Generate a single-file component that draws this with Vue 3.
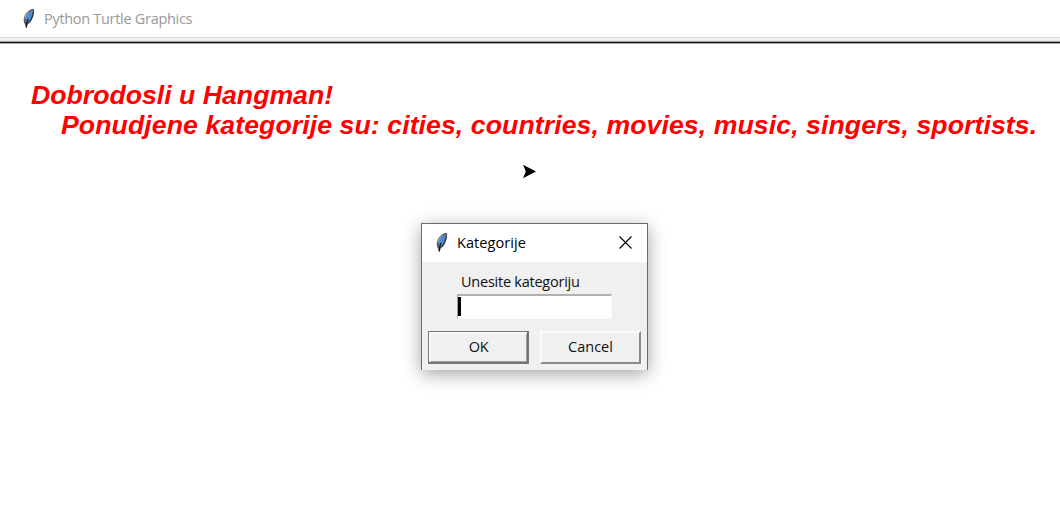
<script setup>
import { ref } from 'vue'

const category = ref('')
</script>

<template>
  <main class="window">
    <svg class="defs" width="0" height="0" aria-hidden="true">
      <symbol id="feather" viewBox="0 0 13 21">
        <path d="M12 .8C8.300 .8 3.800 4.200 2.300 8.800c-.9 2.500-.8 5 .2 6.800L4.300 19.800 5.700 16.300C8.900 14.600 10.800 11 11.500 7.500 12 5 12.300 3 12 .8z" fill="#555b63" />
        <path d="M10.800 2C7.600 3.300 3.900 7.500 3.200 13l1.500 2C8.200 12.600 10.400 8 10.800 2z" fill="#4d8ad6" />
        <path d="M8 2.600C5 4.300 2.700 7.500 2.300 11.300l1.300-1z" fill="#9aa1a9" />
        <path d="M6 11C5 13 4.400 15.500 4.300 19.500" fill="none" stroke="#15191f" stroke-width="1.400" />
        <path d="M11.300 4C10.900 8.500 9 12.500 6.200 15" fill="none" stroke="#23272d" stroke-width=".8" />
      </symbol>
    </svg>
    <header class="titlebar">
      <svg class="feather"><use href="#feather" /></svg>
      <span class="title">Python Turtle Graphics</span>
    </header>
    <div class="edge"></div>

    <section class="canvas">
      <p class="line first">Dobrodosli u Hangman!</p>
      <p class="line second">Ponudjene kategorije su: cities, countries, movies, music, singers, sportists.</p>
      <svg class="turtle" width="15" height="15" viewBox="0 0 15 15">
        <path d="M1 .8 14 7.500 1 14.200 3.800 7.500z" fill="#000" />
      </svg>
    </section>

    <form class="dialog" @submit.prevent>
      <div class="dialog-title">
        <svg class="feather"><use href="#feather" /></svg>
        <span class="name">Kategorije</span>
        <svg class="close" width="13" height="13" viewBox="0 0 13 13">
          <path d="M.5.5l12 12M12.500.5l-12 12" stroke="#000" stroke-width="1.150" />
        </svg>
      </div>
      <div class="dialog-body">
        <label class="prompt" for="category">Unesite kategoriju</label>
        <div class="field">
          <span class="caret"></span>
          <input id="category" v-model="category" type="text" />
        </div>
        <div class="actions">
          <button class="button default" type="submit"><span class="ok">OK</span></button>
          <button class="button" type="button"><span class="cancel">Cancel</span></button>
        </div>
      </div>
    </form>
  </main>
</template>

<style>
body {
  background: #fff;
}
</style>

<style scoped>
.window {
  position: relative;
  width: 1060px;
  height: 525px;
  overflow: hidden;
  background: #fff;
  font-family: "Open Sans", "Noto Sans", sans-serif;
}
.defs {
  position: absolute;
}
.titlebar {
  display: flex;
  align-items: center;
  height: 37px;
  padding: 0 0 1px 22px;
  box-sizing: border-box;
}
.feather {
  width: 13px;
  height: 21px;
  flex: none;
}
.title {
  margin: 2px 0 0 9px;
  color: #999;
  font-size: 14.5px;
  line-height: 20px;
  white-space: nowrap;
  letter-spacing: -0.3px;
}
.edge {
  height: 7px;
  background: linear-gradient(#d9d9d9 0 1px, #f0f0f0 1px 3px, #e9e9e9 3px 4px, #a0a0a0 4px 5px, #111 5px 6px, #a5a5a5 6px 7px);
}
.canvas {
  padding-top: 36px;
}
.line {
  margin: 0;
  color: #f00;
  font: italic bold 26.67px/30px "Liberation Sans", Arial, sans-serif;
  white-space: nowrap;
}
.first {
  padding-left: 31px;
}
.second {
  padding-left: 61px;
  letter-spacing: 0.075px;
}
.turtle {
  display: block;
  margin: 24px 0 0 522px;
}
.dialog {
  position: absolute;
  left: 421px;
  top: 223px;
  width: 227px;
  height: 147px;
  box-sizing: border-box;
  border: 1px solid #6b6b6b;
  border-bottom: 0;
  background: #f0f0f0;
  box-shadow: 0 4px 17px rgba(0, 0, 0, 0.36);
}
.dialog-title {
  display: flex;
  align-items: center;
  height: 38px;
  padding: 0 15px 1px 13px;
  box-sizing: border-box;
  background: #fff;
}
.name {
  margin-left: 9px;
  font-size: 14.5px;
  line-height: 20px;
  letter-spacing: 0.08px;
}
.close {
  margin-left: auto;
}
.dialog-body {
  padding: 10px 6px 0;
}
.prompt {
  display: block;
  height: 20px;
  margin-left: 33px;
  color: #111;
  font-size: 14.5px;
  line-height: 20px;
  letter-spacing: -0.24px;
  white-space: nowrap;
}
.field {
  display: flex;
  align-items: center;
  width: 155px;
  height: 25px;
  margin: 2px 0 0 29px;
  box-sizing: border-box;
  border: 1px solid #fafafa;
  border-top: 2px solid #b0b0b0;
  border-left-color: #a0a0a0;
  background: #fff;
}
.caret {
  width: 3px;
  height: 19px;
  margin-bottom: 1px;
  background: #000;
}
input {
  flex: 1;
  min-width: 0;
  height: 20px;
  padding: 0;
  border: 0;
  outline: 0;
  background: transparent;
}
.actions {
  display: flex;
  justify-content: space-between;
  margin-top: 12px;
}
.button {
  width: 101px;
  height: 33px;
  padding: 0 0 1px;
  box-sizing: border-box;
  border: 2px solid;
  border-color: #fafafa #8c8c8c #8c8c8c #fafafa;
  background: #f0f0f0;
  color: #111;
  font: 14.5px/20px "Open Sans", "Noto Sans", sans-serif;
}
.default {
  border: 1px solid #787878;
  box-shadow: inset -1px -1px #707070, inset 2px 2px #fafafa, inset -2px -2px #a0a0a0;
}
.ok {
  letter-spacing: -0.3px;
}
</style>
